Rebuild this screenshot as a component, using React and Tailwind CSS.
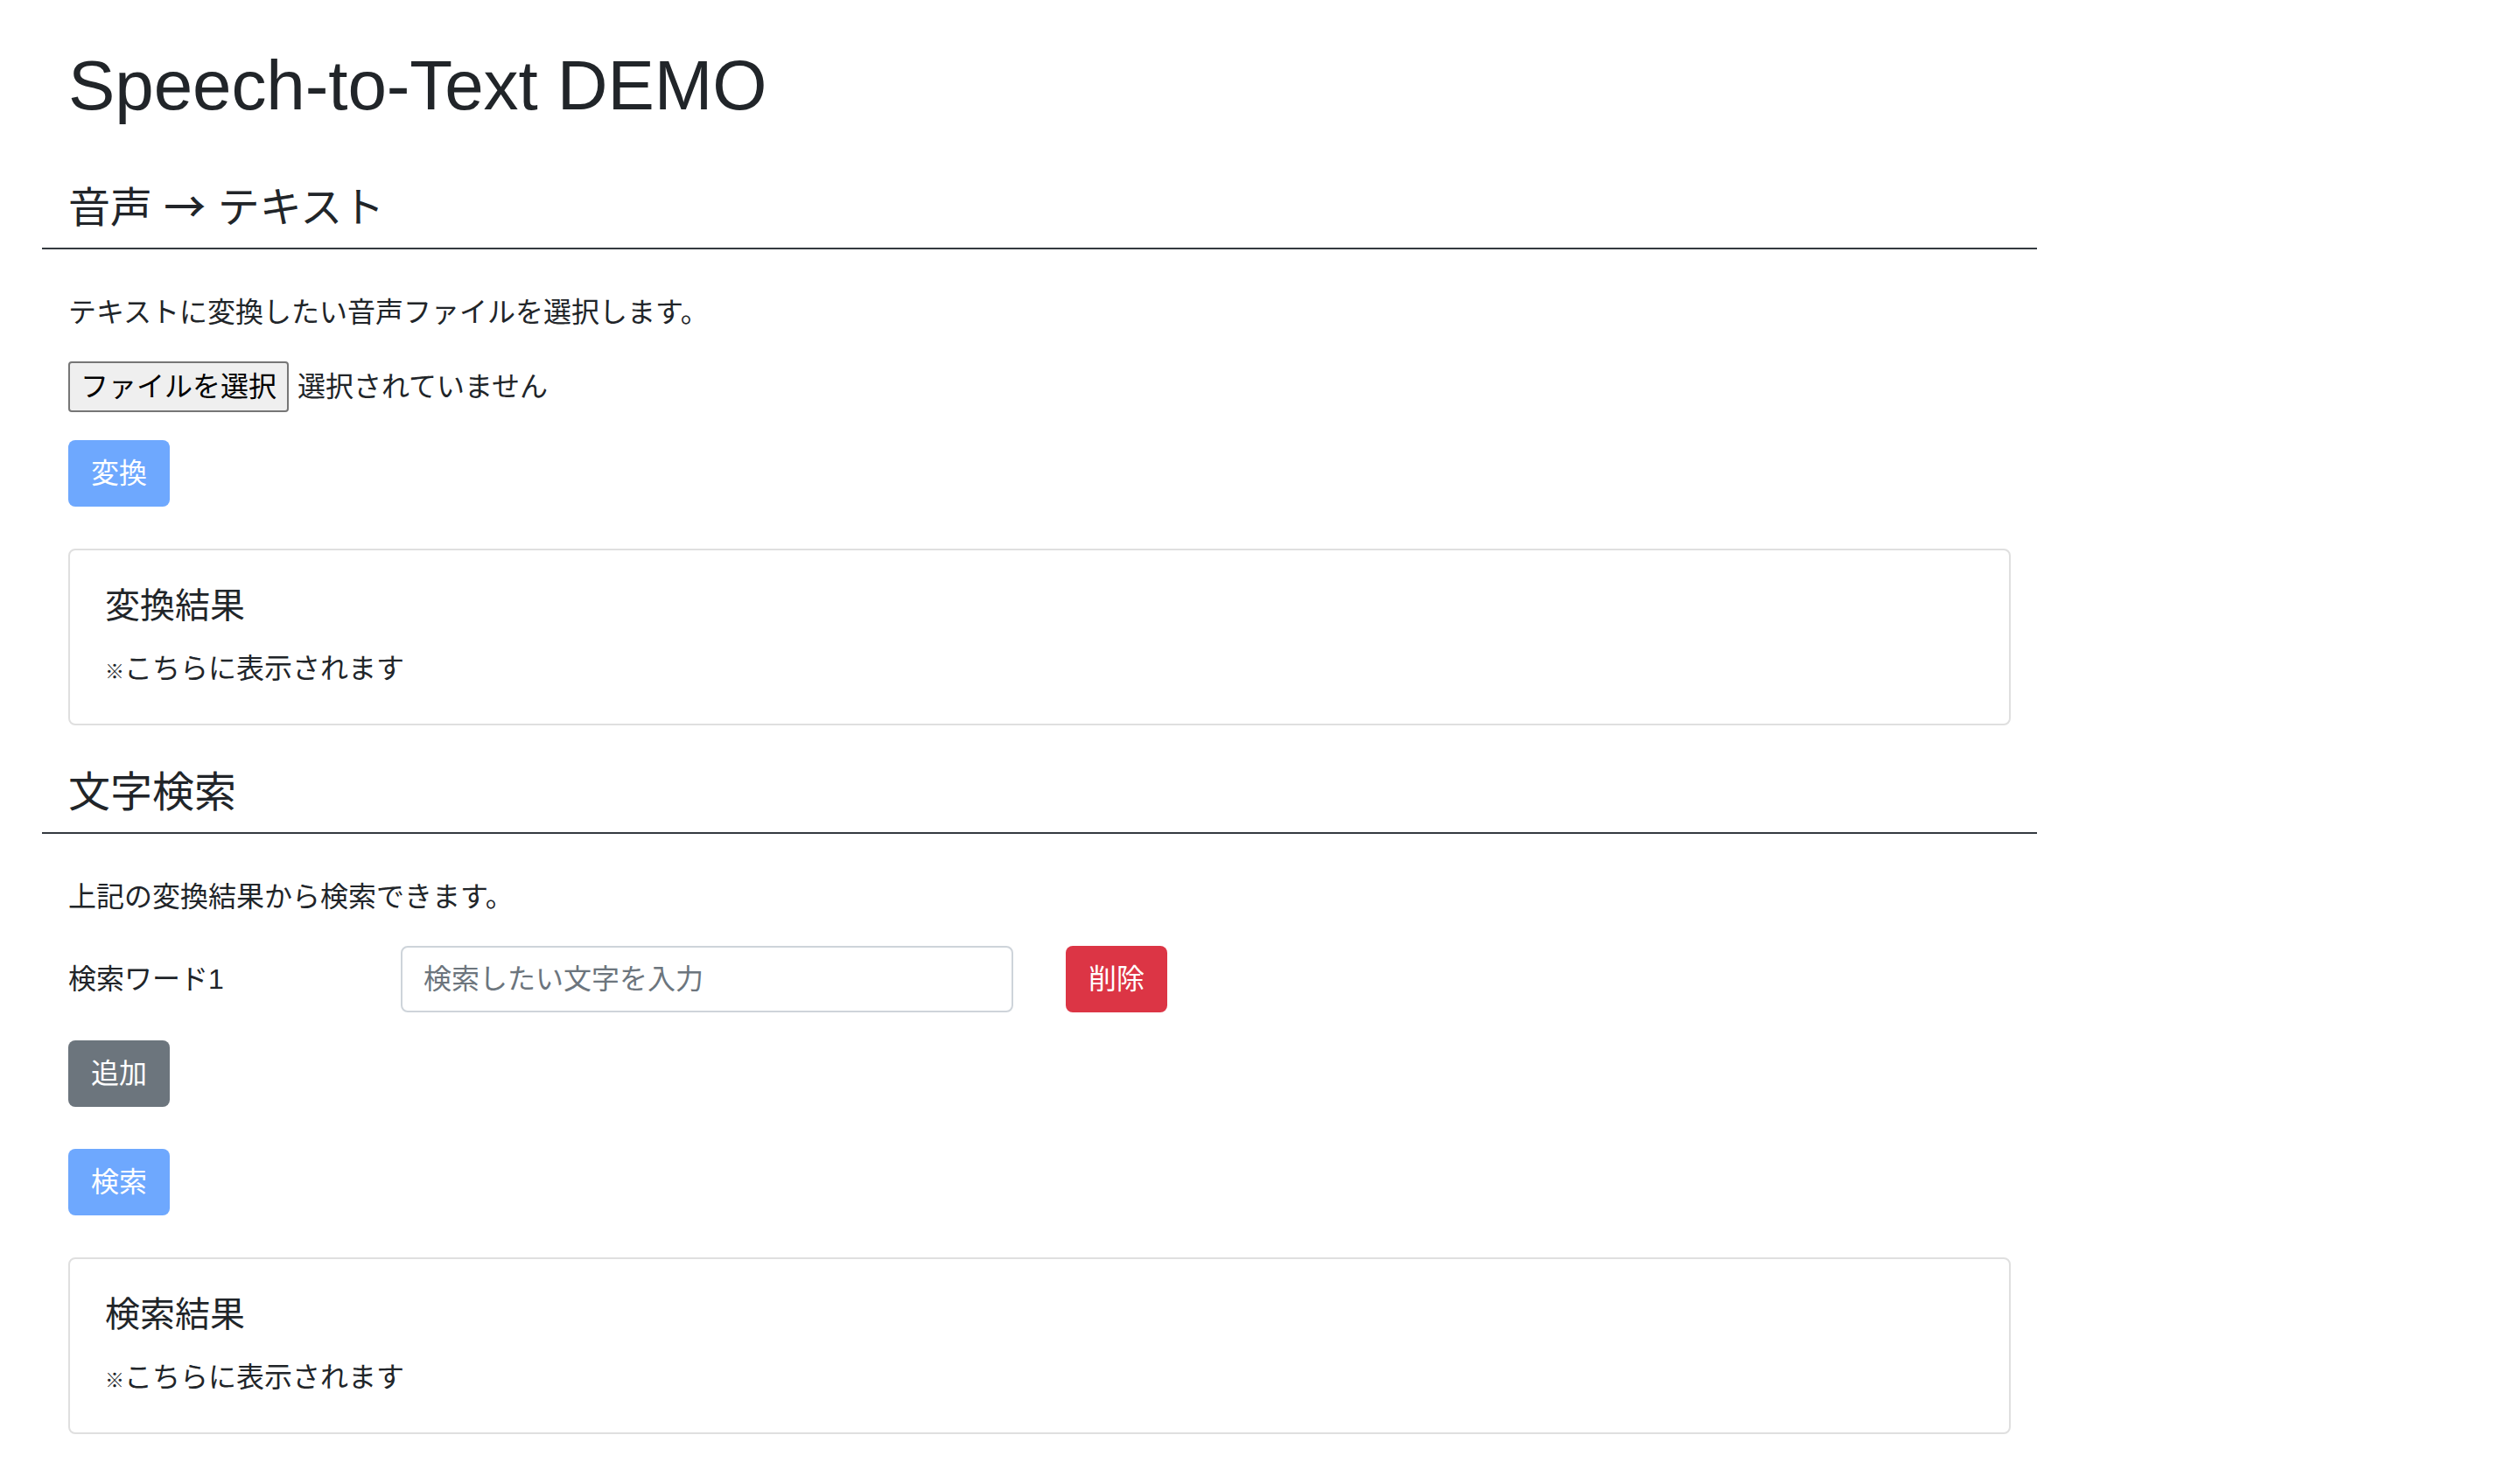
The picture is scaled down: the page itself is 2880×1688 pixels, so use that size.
function SectionHeader({ children }) {
  return (
    <div className="-mx-[30px] px-[30px] border-b-2 border-[#343a40]">
      <h4 className="h-[58px] text-[48px] leading-[58px] font-normal mb-[16px] whitespace-nowrap">{children}</h4>
    </div>
  )
}

function ResultCard({ title }) {
  return (
    <div className="border-2 border-[#dfdfdf] rounded-[8px] px-[40px] py-[39px]">
      <h5 className="text-[40px] leading-[1.2] font-normal mb-[24px]">{title}</h5>
      <p className="text-[32px] leading-[1.5]">
        <span className="text-[22px]">※</span>こちらに表示されます
      </p>
    </div>
  )
}

function Button({ color, children }) {
  return (
    <button
      type="button"
      className={`${color} text-white text-[32px] leading-[48px] px-[24px] py-[12px] border-2 border-transparent rounded-[8px]`}
    >
      {children}
    </button>
  )
}

export default function App() {
  return (
    <div className="min-h-screen bg-white text-[#212529] font-['Liberation_Sans','Noto_Sans_CJK_JP',sans-serif]">
      <div className="ml-[48px] w-[2280px] px-[30px] pt-[50px] pb-[40px]">
        <h1 className="text-[80px] leading-[1.2] font-medium tracking-[-0.1px]">Speech-to-Text DEMO</h1>

        {/* 音声 → テキスト */}
        <div className="mt-[63px]">
          <SectionHeader>
            音声 <span className="font-['Noto_Sans_CJK_JP',sans-serif] font-medium leading-none">→</span> テキスト
          </SectionHeader>
          <p className="mt-[48px] mb-[32px] text-[32px] leading-[1.5]">
            テキストに変換したい音声ファイルを選択します。
          </p>
          <div className="flex items-center mb-[32px]">
            <span className="h-[58px] flex items-center px-[12px] bg-[#efefef] border-2 border-[#767676] rounded-[4px] text-[32px] text-black">
              ファイルを選択
            </span>
            <span className="ml-[10px] text-[32px]">選択されていません</span>
          </div>
          <div className="mb-[48px]">
            <Button color="bg-[#6ea8fe]">変換</Button>
          </div>
          <ResultCard title="変換結果" />
        </div>

        {/* 文字検索 */}
        <div className="mt-[48px]">
          <SectionHeader>文字検索</SectionHeader>
          <p className="mt-[48px] mb-[32px] text-[32px] leading-[1.5]">上記の変換結果から検索できます。</p>
          <div className="flex items-center mb-[32px]">
            <label className="w-[380px] text-[32px]">検索ワード1</label>
            <input
              type="text"
              placeholder="検索したい文字を入力"
              className="w-[700px] h-[76px] px-[24px] border-2 border-[#ced4da] rounded-[8px] text-[32px] placeholder:text-[#6c757d] outline-none"
            />
            <div className="ml-[60px]">
              <Button color="bg-[#dc3545]">削除</Button>
            </div>
          </div>
          <div className="mb-[48px]">
            <Button color="bg-[#6c757d]">追加</Button>
          </div>
          <div className="mb-[48px]">
            <Button color="bg-[#6ea8fe]">検索</Button>
          </div>
          <ResultCard title="検索結果" />
        </div>
      </div>
    </div>
  )
}
